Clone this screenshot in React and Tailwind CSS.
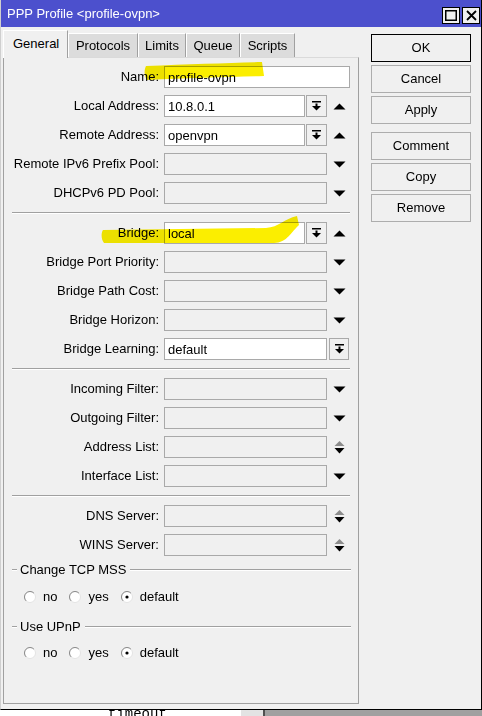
const FIELD = 'h-[22px] border border-[#a9a9a9] flex items-center pl-[3px] leading-none';

function UpTri() {
  return (
    <svg width="13" height="7" viewBox="0 0 13 7">
      <polygon points="0.5,6.5 12.5,6.5 6.5,0.5" fill="#000" />
    </svg>
  );
}

function DownTri() {
  return (
    <svg width="13" height="7" viewBox="0 0 13 7">
      <polygon points="0.5,0.5 12.5,0.5 6.5,6.5" fill="#000" />
    </svg>
  );
}

function Spinner() {
  return (
    <svg width="13" height="15" viewBox="0 0 13 15">
      <polygon points="1.5,6 11.5,6 6.5,1" fill="#8c8c8c" />
      <polygon points="1.5,8 11.5,8 6.5,13.5" fill="#000" />
    </svg>
  );
}

function DropIcon() {
  return (
    <svg width="9" height="10" viewBox="0 0 9 10">
      <rect x="0" y="0" width="9" height="1.5" fill="#000" />
      <rect x="3.5" y="2.5" width="2" height="3" fill="#000" />
      <polygon points="0,5 9,5 4.5,9.5" fill="#000" />
    </svg>
  );
}

function DropBtn({ w = 'w-[21px]' }) {
  return (
    <div className={`${w} h-[22px] border border-[#a9a9a9] flex items-center justify-center shrink-0`}>
      <DropIcon />
    </div>
  );
}

function Trigger({ kind }) {
  return (
    <div className="w-[24px] flex items-center justify-center shrink-0">
      {kind === 'up' && <UpTri />}
      {kind === 'down' && <DownTri />}
      {kind === 'spin' && <Spinner />}
    </div>
  );
}

function Row({ label, children }) {
  return (
    <div className="flex items-center h-[22px]">
      <div className="w-[155px] text-right shrink-0 whitespace-nowrap">{label}</div>
      <div className="ml-[5px] flex items-center">{children}</div>
    </div>
  );
}

function ComboRow({ label, value }) {
  return (
    <Row label={label}>
      <div className={`${FIELD} w-[141px] bg-white`}>{value}</div>
      <div className="ml-px"><DropBtn /></div>
      <Trigger kind="up" />
    </Row>
  );
}

function EmptyRow({ label, kind = 'down' }) {
  return (
    <Row label={label}>
      <div className={`${FIELD} w-[163px]`} />
      <Trigger kind={kind} />
    </Row>
  );
}

function Sep() {
  return <div className="ml-[8px] w-[338px] h-[2px] border-t border-[#a0a0a0] border-b border-b-white my-[8px]" />;
}

function Radio({ checked, label }) {
  return (
    <div className="flex items-center mr-[12px]">
      <svg width="12" height="12" viewBox="0 0 12 12">
        <circle cx="6" cy="6" r="5.5" fill="#fff" stroke="#e3e3e3" strokeWidth="1" />
        <path d="M 2.1 9.9 A 5.5 5.5 0 0 1 9.9 2.1" fill="none" stroke="#8a8a8a" strokeWidth="1" />
        {checked && <circle cx="6" cy="6" r="1.6" fill="#000" />}
      </svg>
      <span className="ml-[7px]">{label}</span>
    </div>
  );
}

function Group({ title, mt }) {
  return (
    <div className={`flex items-center ml-[8px] mr-[7px] h-[16px] ${mt}`}>
      <div className="w-[5px] h-[2px] border-t border-[#a0a0a0] border-b border-b-white" />
      <span className="ml-[3px] whitespace-nowrap">{title}</span>
      <div className="flex-1 ml-[4px] h-[2px] border-t border-[#a0a0a0] border-b border-b-white" />
    </div>
  );
}

function Radios({ mt }) {
  return (
    <div className={`flex items-center ml-[20px] h-[16px] ${mt}`}>
      <Radio label="no" />
      <Radio label="yes" />
      <Radio label="default" checked />
    </div>
  );
}

const tabs = [
  { name: 'Protocols', w: 'w-[70px]' },
  { name: 'Limits', w: 'w-[48px]' },
  { name: 'Queue', w: 'w-[54px]' },
  { name: 'Scripts', w: 'w-[55px]' },
];

function Button({ children, primary, className = '' }) {
  return (
    <div
      className={`w-[100px] h-[28px] flex items-center justify-center border ${
        primary ? 'border-black' : 'border-[#adadad]'
      } bg-[#f0f0f0] ${className}`}
    >
      {children}
    </div>
  );
}

export default function App() {
  return (
    <div className="relative w-[482px] h-[716px] overflow-hidden bg-white font-['Liberation_Sans',Arial,sans-serif] text-[13px] text-black">
      <div className="h-[710px] flex flex-col bg-[#f0f0f0] border-r border-b border-black border-l border-l-[#cfcfcf]">
        {/* title bar */}
        <div className="h-[27px] bg-[#4c50cd] flex items-center pl-[6px] pr-px text-white shrink-0">
          <span className="text-[13px]">PPP Profile &lt;profile-ovpn&gt;</span>
          <div className="ml-auto flex gap-[2px] mt-[3px]">
            <div className="w-[18px] h-[17px] bg-[#f0f0f0] border border-black flex items-center justify-center">
              <svg width="12" height="11" viewBox="0 0 12 11">
                <rect x="0.75" y="0.75" width="10.5" height="9.5" fill="none" stroke="#000" strokeWidth="1.5" />
              </svg>
            </div>
            <div className="w-[18px] h-[17px] bg-[#f0f0f0] border border-black flex items-center justify-center">
              <svg width="11" height="11" viewBox="0 0 11 11">
                <path d="M1 1 L10 10 M10 1 L1 10" stroke="#000" strokeWidth="1.8" />
              </svg>
            </div>
          </div>
        </div>

        <div className="flex flex-1">
          {/* left: tabs + panel */}
          <div className="pl-[2px] flex flex-col">
            <div className="h-[30px] flex items-end">
              <div className="relative z-10 w-[65px] h-[28px] -mb-px bg-[#f0f0f0] border border-b-0 border-t-white border-l-white border-r-[#a0a0a0] flex items-center pl-[9px] pb-[1px]">
                General
              </div>
              {tabs.map((t) => (
                <div
                  key={t.name}
                  className={`${t.w} h-[24px] bg-[#dcdcdc] border-l border-l-white border-t border-t-white border-r border-r-[#a0a0a0] flex items-center justify-center`}
                >
                  {t.name}
                </div>
              ))}
            </div>
            <div className="w-[356px] h-[647px] border border-[#a0a0a0] border-t-[#dadada] flex flex-col pt-[8px]">
              <div className="flex flex-col gap-[7px]">
                <Row label="Name:">
                  <div className={`${FIELD} w-[186px] bg-white`}>profile-ovpn</div>
                </Row>
                <ComboRow label="Local Address:" value="10.8.0.1" />
                <ComboRow label="Remote Address:" value="openvpn" />
                <EmptyRow label="Remote IPv6 Prefix Pool:" />
                <EmptyRow label="DHCPv6 PD Pool:" />
              </div>
              <Sep />
              <div className="flex flex-col gap-[7px]">
                <ComboRow label="Bridge:" value="local" />
                <EmptyRow label="Bridge Port Priority:" />
                <EmptyRow label="Bridge Path Cost:" />
                <EmptyRow label="Bridge Horizon:" />
                <Row label="Bridge Learning:">
                  <div className={`${FIELD} w-[163px] bg-white`}>default</div>
                  <div className="ml-[2px]"><DropBtn w="w-[20px]" /></div>
                </Row>
              </div>
              <Sep />
              <div className="flex flex-col gap-[7px]">
                <EmptyRow label="Incoming Filter:" />
                <EmptyRow label="Outgoing Filter:" />
                <EmptyRow label="Address List:" kind="spin" />
                <EmptyRow label="Interface List:" />
              </div>
              <Sep />
              <div className="flex flex-col gap-[7px]">
                <EmptyRow label="DNS Server:" kind="spin" />
                <EmptyRow label="WINS Server:" kind="spin" />
              </div>
              <Group title="Change TCP MSS" mt="mt-[6px]" />
              <Radios mt="mt-[11px]" />
              <Group title="Use UPnP" mt="mt-[14px]" />
              <Radios mt="mt-[10px]" />
            </div>
          </div>

          {/* right: buttons */}
          <div className="ml-[12px] pt-[7px] flex flex-col gap-[3px]">
            <Button primary>OK</Button>
            <Button>Cancel</Button>
            <Button>Apply</Button>
            <Button className="mt-[5px]">Comment</Button>
            <Button>Copy</Button>
            <Button>Remove</Button>
          </div>
        </div>
      </div>

      {/* what lies behind the window */}
      <div className="h-[6px] flex overflow-hidden">
        <div className="w-[241px] bg-white pl-[108px]">
          <div className="-mt-[3px] font-['Liberation_Mono',monospace] text-[14px] leading-[14px]">timeout</div>
        </div>
        <div className="w-[22px] bg-[#e3e3e3]" />
        <div className="flex-1 bg-[#a0a0a0] border-l-2 border-[#505050]" />
      </div>

      {/* yellow marker annotations */}
      <svg className="absolute inset-0 pointer-events-none mix-blend-multiply" width="482" height="716" viewBox="0 0 482 716">
        <path d="M146,66 C190,64 230,63 262,62 L264,76 C230,77 190,78 147,80 C144,76 144,70 146,66 Z" fill="#fbee00" />
        <path d="M103,230 L266,228 C279,227 284,219 297,216 L299,225 C292,231 287,243 274,243 L104,243 C101,239 101,233 103,230 Z" fill="#fbee00" />
      </svg>
    </div>
  );
}
